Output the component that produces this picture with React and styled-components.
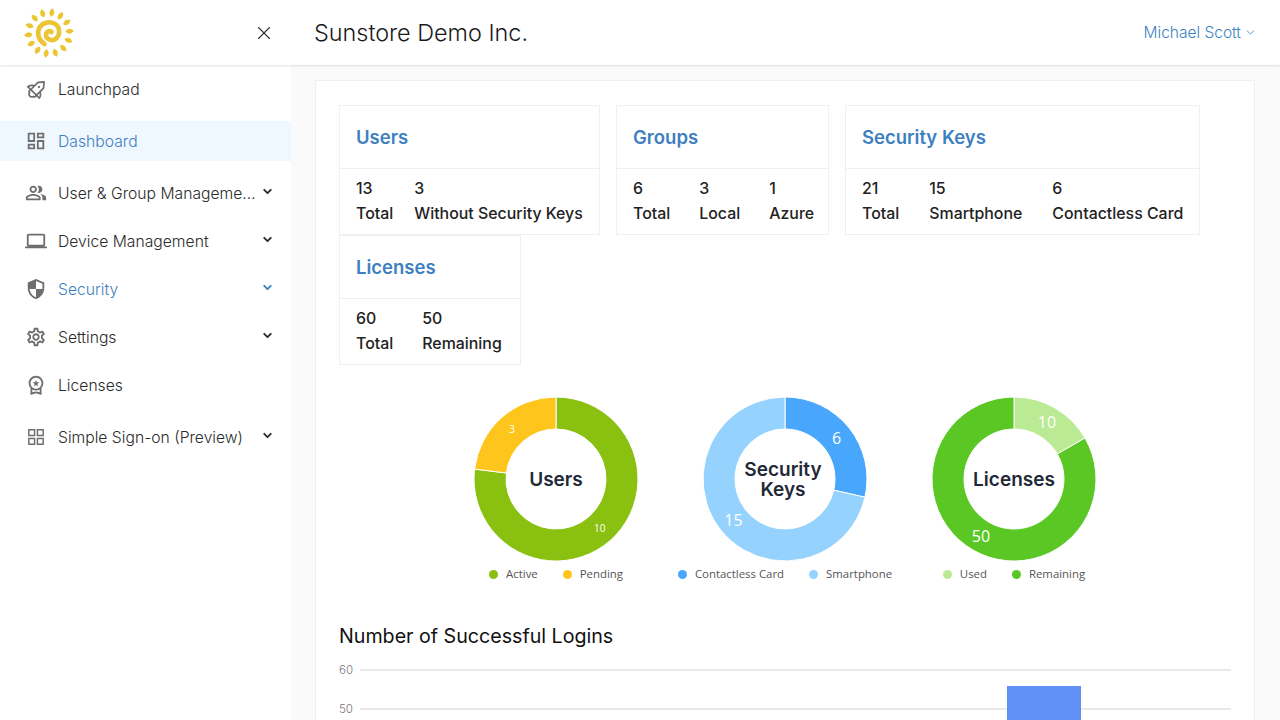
import React from 'react';
import styled, { createGlobalStyle } from 'styled-components';
import { AiOutlineRocket, AiOutlineAppstore } from 'react-icons/ai';
import { MdOutlineDashboard, MdSecurity, MdOutlineWorkspacePremium, MdOutlinePeopleAlt, MdOutlineLaptop, MdOutlineSettings } from 'react-icons/md';
import { FiChevronDown } from 'react-icons/fi';
import { X } from 'lucide-react';

const GlobalStyle = createGlobalStyle`
html, body { margin: 0; padding: 0; height: 100%; overflow: hidden; }
body { font-family: "Inter", "Noto Sans", sans-serif; background: #fafafa; color: #222; }
`

const Page = styled.div`
width: 1280px;
height: 720px;
overflow: hidden;
display: flex;
flex-direction: column;
`
const Header = styled.header`
height: 65px;
flex: none;
display: flex;
align-items: center;
background: #fff;
box-shadow: 0 1px 2px rgba(0,0,0,0.12);
position: relative;
z-index: 2;
`
const LogoBox = styled.div`
width: 291px;
height: 65px;
flex: none;
display: flex;
align-items: center;
justify-content: space-between;
padding: 0 16px 0 23px;
box-sizing: border-box;
color: #333;
`
const Company = styled.h1`
margin: 0 0 0 23px;
font-size: 23.4px;
font-weight: 300;
color: #1a1a1a;
flex: 1;
`
const UserMenu = styled.div`
display: flex;
align-items: center;
gap: 3px;
padding-right: 23px;
font-size: 15.5px;
font-weight: 300;
color: #3d7fc0;
`
const Body = styled.div`
flex: 1;
display: flex;
min-height: 0;
`
const Sidebar = styled.nav`
width: 291px;
flex: none;
background: #fff;
padding-top: 4px;
box-sizing: border-box;
`
const MenuRow = styled.div`
height: 40px;
margin-bottom: ${p => (p.$sub ? '8px' : '12px')};
display: flex;
align-items: center;
padding: 0 17px 0 25px;
background: ${p => (p.$active ? '#f0f8ff' : 'transparent')};
color: ${p => (p.$blue ? '#3d7fc0' : '#2b2b2b')};
font-size: 15.7px;
font-weight: 300;
`
const MenuIcon = styled.span`
width: 33px;
flex: none;
display: flex;
align-items: center;
font-size: ${p => p.$size || 22}px;
color: #6e6e6e;
svg {
  transform: ${p => p.$transform || 'none'};
  margin-left: ${p => (p.$size ? '-1px' : '0')};
}
`
const MenuText = styled.span`
flex: 1;
max-width: 198px;
margin-right: auto;
white-space: nowrap;
overflow: hidden;
text-overflow: ellipsis;
`
const Arrow = styled.span`
display: flex;
margin-top: -3px;
margin-left: auto;
font-size: 13px;
`
const Main = styled.main`
flex: 1;
padding: 15px 25px 0 24px;
min-width: 0;
`
const Panel = styled.section`
background: #fff;
border: 1px solid #f0f0f0;
padding: 24px 23px;
height: 700px;
box-sizing: border-box;
`
const CardWrap = styled.div`
display: flex;
flex-wrap: wrap;
column-gap: 16px;
`
const StatCard = styled.div`
width: ${p => p.$width}px;
border: 1px solid #f0f0f0;
height: 130px;
box-sizing: border-box;
`
const CardTitle = styled.div`
height: 63px;
padding: 0 16px 1px;
box-sizing: border-box;
display: flex;
align-items: center;
border-bottom: 1px solid #f0f0f0;
font-size: 18.5px;
font-weight: 600;
color: #3d7fc0;
`
const CardBody = styled.div`
display: flex;
gap: ${p => p.$gap}px;
padding: 7px 16px 0;
`
const StatCol = styled.div`
display: flex;
flex-direction: column;
font-size: 15.9px;
font-weight: 450;
line-height: 25px;
color: #222;
white-space: nowrap;
`
const DonutRow = styled.div`
display: flex;
justify-content: center;
margin-top: 32px;
`
const DonutBox = styled.div`
width: 229px;
display: flex;
flex-direction: column;
align-items: center;
`
const DonutFrame = styled.div`
position: relative;
width: 164px;
height: 164px;
`
const DonutLabel = styled.div`
position: absolute;
inset: 0;
display: flex;
align-items: center;
justify-content: center;
text-align: center;
padding-top: 2px;
padding-right: ${p => p.$nudge || 0}px;
font-size: 19px;
line-height: 20px;
font-weight: 600;
color: #1f2937;
`
const Legend = styled.div`
display: flex;
justify-content: center;
gap: 25px;
margin-top: 5px;
font-family: "Open Sans", sans-serif;
font-size: 11.4px;
line-height: 16px;
color: #555;
`
const LegendItem = styled.span`
display: flex;
align-items: center;
gap: 8px;
white-space: nowrap;
`
const Dot = styled.i`
width: 9px;
height: 9px;
border-radius: 50%;
background: ${p => p.$color};
`
const ChartTitle = styled.h2`
margin: 41px 0 0;
font-size: 19.65px;
line-height: 26px;
font-weight: 400;
color: #111;
`
const ChartSvg = styled.svg`
display: block;
margin: 7px 0 0 -4px;
`

const polar = (r, deg) => {
  const a = (deg - 90) * Math.PI / 180;
  return [82 + r * Math.cos(a), 82 + r * Math.sin(a)];
};

function slicePath(from, to) {
  const [x1, y1] = polar(82, from);
  const [x2, y2] = polar(82, to);
  const [x3, y3] = polar(50, to);
  const [x4, y4] = polar(50, from);
  const big = to - from > 180 ? 1 : 0;
  return `M${x1} ${y1}A82 82 0 ${big} 1 ${x2} ${y2}L${x3} ${y3}A50 50 0 ${big} 0 ${x4} ${y4}Z`;
}

function Donut({ title, slices, fontSize, nudge }) {
  const total = slices.reduce((s, x) => s + x.value, 0);
  let at = 0;
  return (
    <DonutBox>
      <DonutFrame>
        <svg width="164" height="164" viewBox="0 0 164 164">
          {slices.map(s => {
            const from = at;
            const to = at + (s.value / total) * 360;
            at = to;
            const [tx, ty] = polar(66, (from + to) / 2);
            return (
              <g key={s.name}>
                <path d={slicePath(from, to)} fill={s.color} stroke="#fff" strokeWidth="1" />
                <text x={tx} y={ty + fontSize * 0.36} textAnchor="middle" fill="#fff" fontSize={fontSize} fontFamily="Open Sans, sans-serif">{s.value}</text>
              </g>
            );
          })}
        </svg>
        <DonutLabel $nudge={nudge}>{title}</DonutLabel>
      </DonutFrame>
      <Legend>
        {slices.map(s => (
          <LegendItem key={s.name}><Dot $color={s.color} />{s.name}</LegendItem>
        ))}
      </Legend>
    </DonutBox>
  );
}

function SunLogo() {
  const rays = [];
  for (let i = 0; i < 14; i++) {
    rays.push(
      <path key={i} d="M0 -16.5C3.4 -19 3.2 -22 0 -25C-3.2 -22 -3.4 -19 0 -16.5Z" fill="#ecc535" transform={`rotate(${i * 25.7 + 8})`} />
    );
  }
  return (
    <svg width="52" height="52" viewBox="-26 -26 52 52">
      {rays}
      <path d="M-4.5 11C-10.5 7.5 -12.5 0 -9.5 -5.5C-6 -11 2 -12.5 7 -8.5C11.5 -4.5 11 3 6.5 6C3 8.4 -2.5 6.5 -3 2.5C-3.3 -1 0.5 -3 2.5 -1" fill="none" stroke="#ecc535" strokeWidth="4.6" strokeLinecap="round" />
    </svg>
  );
}

const menu = [
  { label: 'Launchpad', icon: <AiOutlineRocket />, size: 26, transform: 'rotate(45deg)' },
  { label: 'Dashboard', icon: <MdOutlineDashboard />, active: true, blue: true },
  { label: 'User & Group Management', icon: <MdOutlinePeopleAlt />, sub: true },
  { label: 'Device Management', icon: <MdOutlineLaptop />, sub: true },
  { label: 'Security', icon: <MdSecurity />, sub: true, blue: true, transform: 'scaleX(-1)' },
  { label: 'Settings', icon: <MdOutlineSettings />, sub: true },
  { label: 'Licenses', icon: <MdOutlineWorkspacePremium /> },
  { label: 'Simple Sign-on (Preview)', icon: <AiOutlineAppstore />, sub: true },
];

const cards = [
  { title: 'Users', width: 261, gap: 21, stats: [['13', 'Total'], ['3', 'Without Security Keys']] },
  { title: 'Groups', width: 213, gap: 29, stats: [['6', 'Total'], ['3', 'Local'], ['1', 'Azure']] },
  { title: 'Security Keys', width: 355, gap: 30, stats: [['21', 'Total'], ['15', 'Smartphone'], ['6', 'Contactless Card']] },
  { title: 'Licenses', width: 182, gap: 29, stats: [['60', 'Total'], ['50', 'Remaining']] },
];

const donuts = [
  { title: 'Users', fontSize: 10, slices: [{ name: 'Active', value: 10, color: '#8ac110' }, { name: 'Pending', value: 3, color: '#fec51c' }] },
  { title: <>Security<br />Keys</>, fontSize: 16, nudge: 4, slices: [{ name: 'Contactless Card', value: 6, color: '#48a7fd' }, { name: 'Smartphone', value: 15, color: '#95d3fe' }] },
  { title: 'Licenses', fontSize: 16, slices: [{ name: 'Used', value: 10, color: '#bbea95' }, { name: 'Remaining', value: 50, color: '#5ac725' }] },
];

export default function App() {
  return (
    <Page>
      <GlobalStyle />
      <Header>
        <LogoBox>
          <SunLogo />
          <X size={22} strokeWidth={1.2} />
        </LogoBox>
        <Company>Sunstore Demo Inc.</Company>
        <UserMenu>Michael Scott <FiChevronDown size={13} strokeWidth={1.5} /></UserMenu>
      </Header>
      <Body>
        <Sidebar>
          {menu.map(m => (
            <MenuRow key={m.label} $sub={m.sub} $active={m.active} $blue={m.blue}>
              <MenuIcon $size={m.size} $transform={m.transform}>{m.icon}</MenuIcon>
              <MenuText>{m.label}</MenuText>
              {m.sub && <Arrow><FiChevronDown strokeWidth={3.5} /></Arrow>}
            </MenuRow>
          ))}
        </Sidebar>
        <Main>
          <Panel>
            <CardWrap>
              {cards.map(c => (
                <StatCard key={c.title} $width={c.width}>
                  <CardTitle>{c.title}</CardTitle>
                  <CardBody $gap={c.gap}>
                    {c.stats.map(s => (
                      <StatCol key={s[1]}><span>{s[0]}</span><span>{s[1]}</span></StatCol>
                    ))}
                  </CardBody>
                </StatCard>
              ))}
            </CardWrap>
            <DonutRow>
              {donuts.map((d, i) => <Donut key={i} {...d} />)}
            </DonutRow>
            <ChartTitle>Number of Successful Logins</ChartTitle>
            <ChartSvg width="900" height="70" viewBox="0 0 900 70">
              <text x="4" y="18" fontSize="11.5" fontWeight="300" fill="#777" fontFamily="Inter, sans-serif">60</text>
              <text x="4" y="57" fontSize="11.5" fontWeight="300" fill="#777" fontFamily="Inter, sans-serif">50</text>
              <line x1="25" x2="896" y1="14" y2="14" stroke="#e0e0e0" strokeWidth="1.4" />
              <line x1="25" x2="896" y1="53" y2="53" stroke="#e0e0e0" strokeWidth="1.4" />
              <rect x="672" y="30" width="74" height="40" fill="#6090f5" />
            </ChartSvg>
          </Panel>
        </Main>
      </Body>
    </Page>
  );
}
